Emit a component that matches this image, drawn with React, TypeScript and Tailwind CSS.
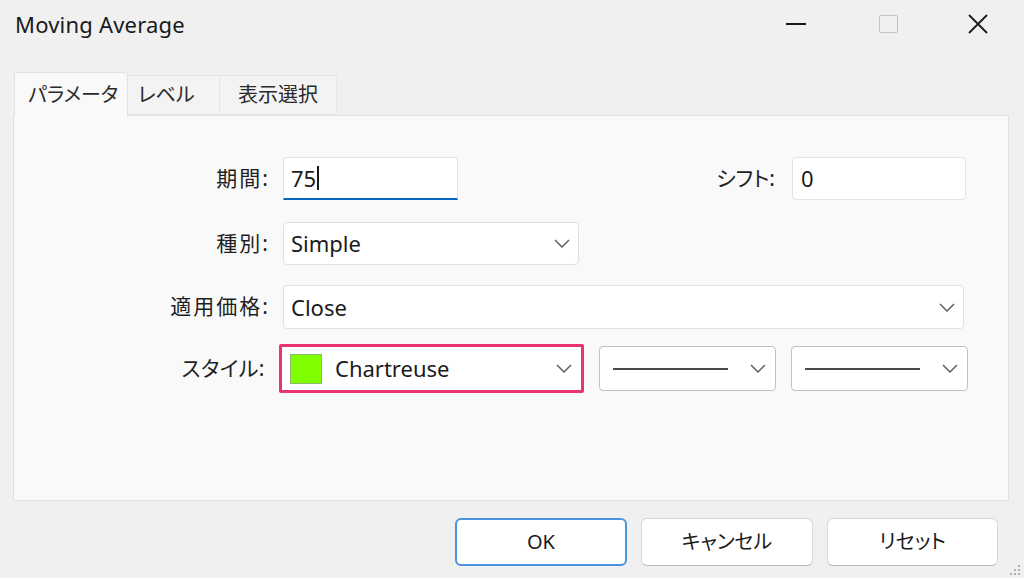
import React from 'react'

const font = "font-['Noto_Sans','Noto_Sans_CJK_JP',sans-serif]"

function Chevron() {
  return (
    <svg width="16" height="9" viewBox="0 0 16 9" className="shrink-0">
      <polyline points="1,1 8,8 15,1" fill="none" stroke="#606060" strokeWidth="1.5" />
    </svg>
  )
}

function LineSample() {
  return <div className="h-[2px] flex-1 bg-[#4a4a4a]" />
}

function Label({ children }: { children: React.ReactNode }) {
  return (
    <div className="w-[269px] shrink-0 pr-[13px] text-right text-[21px] text-[#1f1f1f] tracking-[2px]">
      {children}
    </div>
  )
}

export default function App() {
  return (
    <div className={`${font} w-[1024px] h-[578px] bg-[#f0f0f0] flex flex-col overflow-hidden relative`}>
      {/* Title bar */}
      <div className="h-[48px] flex items-center pl-[15px] shrink-0">
        <div className="text-[22px] text-[#1a1a1a] tracking-[0.2px]">Moving Average</div>
        <div className="ml-auto flex items-center h-full">
          <div className="w-[90px] h-full flex items-center justify-center mr-[2px]">
            <div className="w-[20px] h-[2px] bg-[#1a1a1a]" />
          </div>
          <div className="w-[90px] h-full flex items-center justify-center">
            <div className="w-[19px] h-[18px] border-[1.5px] border-[#c4c4c4] rounded-[2px]" />
          </div>
          <div className="w-[90px] h-full flex items-center justify-center mr-[1px]">
            <svg width="20" height="20" viewBox="0 0 20 20">
              <path d="M1 1 L19 19 M19 1 L1 19" stroke="#1a1a1a" strokeWidth="1.8" />
            </svg>
          </div>
        </div>
      </div>

      {/* Tabs */}
      <div className="mt-[24px] pl-[14px] flex items-end h-[43px] relative z-10 text-[20px] text-[#2a2a2a] [font-feature-settings:'palt']">
        <div className="w-[114px] h-[45px] -mb-[2px] bg-[#f9f9f9] border border-b-0 border-[#e2e2e2] rounded-t-[3px] flex items-center pl-[13px]">
          パラメータ
        </div>
        <div className="w-[92px] h-[40px] bg-[#f3f3f3] border border-l-0 border-[#e6e6e6] flex items-center pl-[10px]">
          レベル
        </div>
        <div className="w-[117px] h-[40px] bg-[#f3f3f3] border border-l-0 border-[#e6e6e6] flex items-center justify-center">
          表示選択
        </div>
      </div>

      {/* Panel */}
      <div className="ml-[13px] w-[996px] h-[386px] bg-[#f9f9f9] border border-[#e2e2e2] pt-[41px] flex flex-col">
        {/* 期間 / シフト */}
        <div className="flex items-center h-[43px]">
          <Label>期間:</Label>
          <div className="w-[175px] h-[43px] bg-white border border-[#e3e3e3] border-b-[2px] border-b-[#0067c0] rounded-t-[4px] flex items-center pl-[7px] text-[22px] text-[#1a1a1a]">
            75<span className="w-[1.5px] h-[24px] bg-[#1a1a1a] ml-[1px]" />
          </div>
          <div className="ml-auto pr-[17px] text-[21px] text-[#1f1f1f] [font-feature-settings:'palt']">シフト:</div>
          <div className="w-[174px] h-[43px] mr-[42px] bg-white border border-[#e3e3e3] rounded-[4px] flex items-center pl-[8px] text-[22px] text-[#1a1a1a]">
            0
          </div>
        </div>

        {/* 種別 */}
        <div className="flex items-center h-[43px] mt-[22px]">
          <Label>種別:</Label>
          <div className="w-[296px] h-[43px] bg-white border border-[#e0e0e0] rounded-[4px] flex items-center pl-[7px] pr-[8px] text-[22px] text-[#1a1a1a]">
            <span className="flex-1">Simple</span>
            <Chevron />
          </div>
        </div>

        {/* 適用価格 */}
        <div className="flex items-center h-[44px] mt-[20px]">
          <Label>適用価格:</Label>
          <div className="w-[681px] h-[44px] bg-white border border-[#e0e0e0] rounded-[4px] flex items-center pl-[7px] pr-[8px] text-[22px] text-[#1a1a1a]">
            <span className="flex-1">Close</span>
            <Chevron />
          </div>
        </div>

        {/* スタイル */}
        <div className="flex items-center h-[49px] mt-[15px]">
          <div className="w-[265px] shrink-0 pr-[14px] text-right text-[21px] text-[#1f1f1f] [font-feature-settings:'palt'] tracking-[0.5px]">
            スタイル:
          </div>
          <div className="w-[305px] h-[49px] border-[3px] border-[#e8356d] rounded-[2px] p-[1px] bg-white">
            <div className="h-full bg-white flex items-center pl-[7px] pr-[8px] text-[22px] text-[#1a1a1a]">
              <div className="w-[32px] h-[30px] bg-[#7fff00] border border-[#8ab870] mr-[13px]" />
              <span className="flex-1">Chartreuse</span>
              <Chevron />
            </div>
          </div>
          <div className="ml-[15px] w-[177px] h-[45px] bg-white border border-[#c0c0c0] rounded-[4px] flex items-center pl-[13px] pr-[9px] gap-[22px]">
            <LineSample />
            <Chevron />
          </div>
          <div className="ml-[15px] w-[177px] h-[45px] bg-white border border-[#c0c0c0] rounded-[4px] flex items-center pl-[13px] pr-[9px] gap-[22px]">
            <LineSample />
            <Chevron />
          </div>
        </div>
      </div>

      {/* Buttons */}
      <div className="flex justify-end pr-[26px] mt-[17px] gap-[14px] text-[20px] text-[#1a1a1a] [font-feature-settings:'palt']">
        <button className="w-[172px] h-[48px] bg-white border-2 border-[#4a94dc] rounded-[6px] flex items-center justify-center">
          OK
        </button>
        <button className="w-[172px] h-[48px] bg-white border border-[#d6d6d6] border-b-[#bdbdbd] rounded-[6px] flex items-center justify-center">
          キャンセル
        </button>
        <button className="w-[171px] h-[48px] bg-white border border-[#d6d6d6] border-b-[#bdbdbd] rounded-[6px] flex items-center justify-center">
          リセット
        </button>
      </div>

      {/* resize grip */}
      <svg width="12" height="12" viewBox="0 0 12 12" className="absolute right-[3px] bottom-[2px]">
        <circle cx="10" cy="2" r="1" fill="#9a9a9a" />
        <circle cx="6" cy="6" r="1" fill="#9a9a9a" />
        <circle cx="10" cy="6" r="1" fill="#9a9a9a" />
        <circle cx="2" cy="10" r="1" fill="#9a9a9a" />
        <circle cx="6" cy="10" r="1" fill="#9a9a9a" />
        <circle cx="10" cy="10" r="1" fill="#9a9a9a" />
      </svg>
    </div>
  )
}
